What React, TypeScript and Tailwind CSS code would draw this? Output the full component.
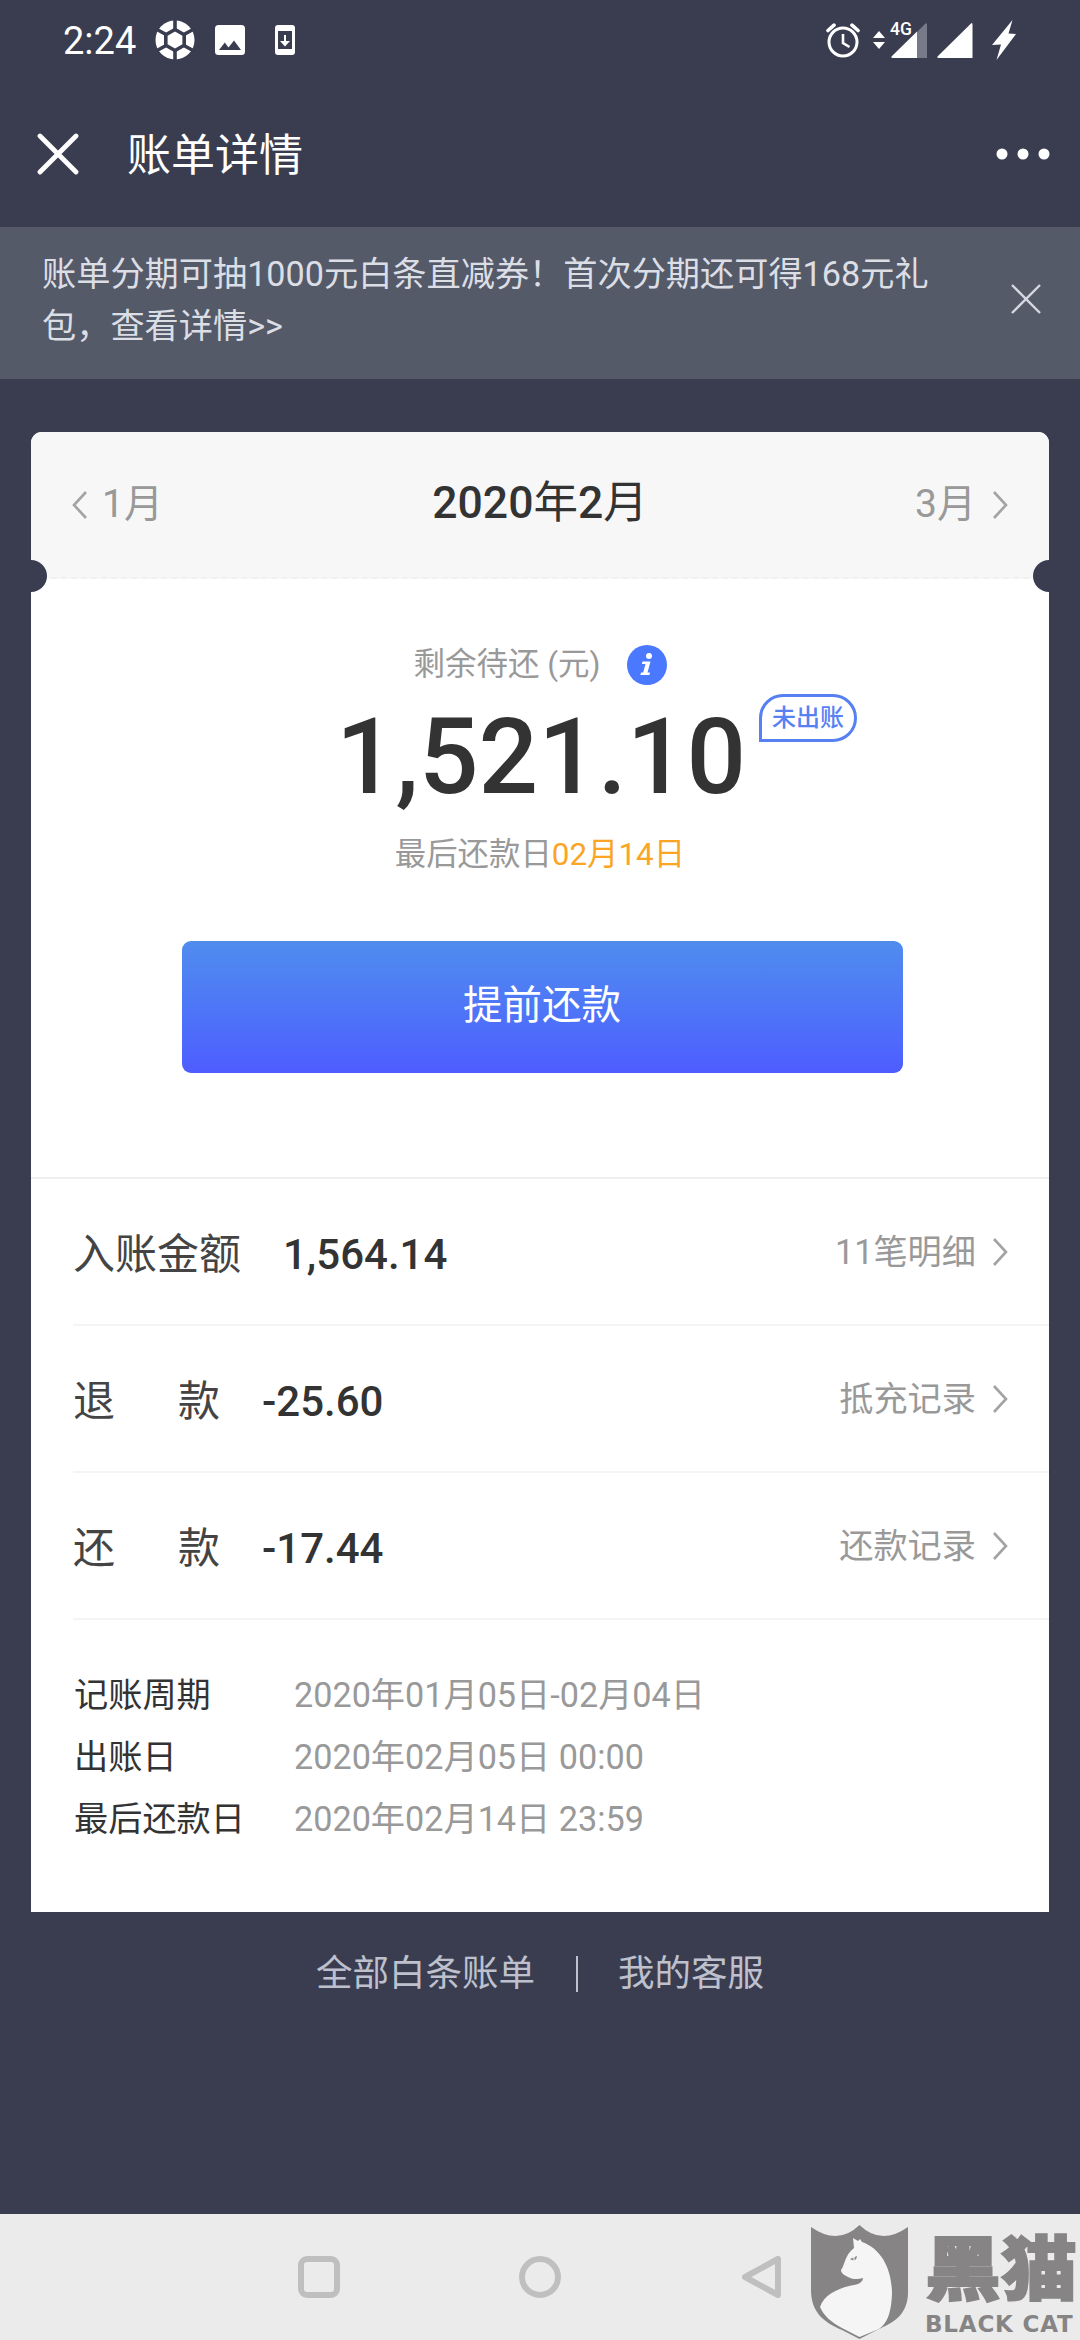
import clsx from 'clsx'
import type { ReactNode } from 'react'

type BillRow = {
    label: string
    amount: string
    link: string
}

const rows: BillRow[] = [
    { label: '入账金额', amount: '1,564.14', link: '11笔明细' },
    { label: '退款', amount: '-25.60', link: '抵充记录' },
    { label: '还款', amount: '-17.44', link: '还款记录' },
]

const details = [
    { label: '记账周期', value: '2020年01月05日-02月04日' },
    { label: '出账日', value: '2020年02月05日 00:00' },
    { label: '最后还款日', value: '2020年02月14日 23:59' },
]

const Chevron = ({ left, className }: { left?: boolean; className?: string }) => (
    <svg
        viewBox="0 0 16 28"
        className={clsx('h-7 w-4 shrink-0', left && 'rotate-180', className)}
        fill="none"
        stroke="#a3a3a3"
        strokeWidth="2.6"
    >
        <path d="M2 1 14 14 2 27" />
    </svg>
)

const BallIcon = () => (
    <svg viewBox="0 0 40 40" className="size-10">
        <circle cx="20" cy="20" r="19.5" fill="#fff" />
        <g stroke="#3a3d50" strokeWidth="3.6" fill="none">
            <path d="M20 0V10M20 30V40M2 9.5 12 15M28 15 38 9.5M2 30.5 12 25M28 25 38 30.5" />
            <path d="M20 9.5 29.2 14.8V25.2L20 30.5 10.8 25.2V14.8Z" />
        </g>
    </svg>
)

const StatusBar = () => (
    <div className="flex h-20 items-center pr-16 pl-[63px] text-white">
        <span className="w-[92px] pt-[2px] text-[38px] leading-[40px]">2:24</span>
        <BallIcon />
        <svg viewBox="0 0 30 30" className="ml-5 size-[30px]">
            <path
                fillRule="evenodd"
                fill="#fff"
                d="M3.5 0h23A3.5 3.5 0 0 1 30 3.5v23a3.5 3.5 0 0 1-3.5 3.5h-23A3.5 3.5 0 0 1 0 26.5v-23A3.5 3.5 0 0 1 3.5 0ZM4 25h22l-7-9.5-5.5 7-3.7-5Z"
            />
        </svg>
        <svg viewBox="0 0 20 30" className="ml-[30px] h-[30px] w-5">
            <path
                fillRule="evenodd"
                fill="#fff"
                d="M3 0h14a3 3 0 0 1 3 3v24a3 3 0 0 1-3 3H3a3 3 0 0 1-3-3V3a3 3 0 0 1 3-3ZM3 6v18h14V6ZM9 10h2v6h4l-5 5.5L5 16h4Z"
            />
        </svg>
        <div className="ml-auto flex items-center">
            <svg viewBox="0 0 34 36" className="h-9 w-[34px]" fill="none" stroke="#fff">
                <circle cx="17" cy="20" r="14" strokeWidth="3" />
                <path d="M17 12v9l6.5 4" strokeWidth="2.6" />
                <path d="M2 8.5 8 3.2M32 8.5 26 3.2" strokeWidth="3.6" strokeLinecap="round" />
            </svg>
            <svg viewBox="0 0 12 18" className="ml-[13px] h-[18px] w-3" fill="#fff">
                <path d="M0 7 6 0l6 7ZM0 11h12l-6 7Z" />
            </svg>
            <div className="relative ml-[6px]">
                <svg viewBox="0 0 36 36" className="size-9">
                    <path d="M26 10 34 2Q36 0 36 3V36H26Z" fill="#777b89" />
                    <path d="M26 9.5V36H2Q-1 36 1 34Z" fill="#fff" />
                </svg>
                <span className="absolute -top-px -left-px text-[17.5px] leading-[17px] font-medium">
                    4G
                </span>
            </div>
            <svg viewBox="0 0 36 36" className="ml-[10px] size-9">
                <path d="M1 34 34 1.5Q35.5 0 35.5 2.5V36H2Q-1 36 1 34Z" fill="#fff" />
            </svg>
            <svg viewBox="0 0 24 40" className="ml-[19px] h-10 w-6" fill="#fff">
                <path d="M20.500 0 16.500 13.500 24 14 4.500 40 9 24.500 0 25Z" />
            </svg>
        </div>
    </div>
)

const TitleBar = () => (
    <header className="flex h-[147px] items-center pr-[30px] pl-[37px] text-white">
        <svg viewBox="0 0 42 42" className="size-[42px]" stroke="#fff" strokeWidth="4.8" strokeLinecap="round">
            <path d="M3 3 39 39M39 3 3 39" />
        </svg>
        <h1 className="ml-12 pt-1 text-[44px] leading-[50px]">账单详情</h1>
        <svg viewBox="0 0 54 12" className="ml-auto h-3 w-[54px]" fill="#fff">
            <circle cx="6" cy="6" r="5.5" />
            <circle cx="27" cy="6" r="5.5" />
            <circle cx="48" cy="6" r="5.5" />
        </svg>
    </header>
)

const PromoBanner = () => (
    <div className="flex h-[152px] items-center bg-[#555a69] pr-[39px] pl-[42px]">
        <p className="w-[900px] pb-[7px] text-[34.2px] leading-[52px] text-[#dcdee6]">
            账单分期可抽1000元白条直减券！首次分期还可得168元礼
            <br />
            包，查看详情&gt;&gt;
        </p>
        <svg viewBox="0 0 30 30" className="mt-[-8px] ml-auto size-[30px]" stroke="#d5d8e0" strokeWidth="2.4">
            <path d="M1 1 29 29M29 1 1 29" />
        </svg>
    </div>
)

const MonthSwitch = () => (
    <div className="relative flex h-[147px] items-center justify-between rounded-t-[11px] border-b-2 border-dashed border-[#f1f1f1] bg-[#f7f7f7] px-[41px] text-[39px] text-[#999]">
        <span className="flex w-[120px] items-center gap-[14px]">
            <Chevron left />
            1月
        </span>
        <span className="pb-[2px] text-[44.5px] font-medium text-[#333]">
            2020<span className="font-normal">年</span>2<span className="font-normal">月</span>
        </span>
        <span className="flex w-[120px] items-center justify-end gap-4">
            3月
            <Chevron />
        </span>
        <i className="absolute -bottom-[15px] -left-4 size-8 rounded-full bg-[#3a3d50]" />
        <i className="absolute -right-4 -bottom-[15px] size-8 rounded-full bg-[#3a3d50]" />
    </div>
)

const Summary = () => (
    <section className="flex h-[600px] flex-col items-center border-b-2 border-[#efefef] pt-[60px]">
        <div className="flex h-[52px] items-center text-[31.5px] text-[#999]">
            剩余待还 (元)
            <svg viewBox="0 0 40 40" className="ml-[26px] size-10">
                <circle cx="20" cy="20" r="20" fill="#4a78ff" />
                <g fill="#fff">
                    <circle cx="22" cy="11" r="3" />
                    <path d="M15.5 16.5h8l-3 11h2.5l-.6 2.5h-9l.6-2.5h2.2l2.3-8.500h-3.6Z" />
                </g>
            </svg>
        </div>
        <div className="relative mt-1 ml-[2px] text-[104.8px] leading-[126px] font-medium text-[#333]">
            1,521.10
            <span className="absolute top-[-1px] left-[423px] flex h-[48px] w-[98px] items-center justify-center rounded-full rounded-bl-none border-[3.5px] border-[#5781f2] text-[24px] leading-none whitespace-nowrap text-[#5781f2]">
                未出账
            </span>
        </div>
        <p className="mt-[9px] text-[31.4px] leading-[50px] text-[#999]">
            最后还款日<span className="text-[#faa524]">02月14日</span>
        </p>
        <button className="mt-[61px] ml-1 h-[132px] w-[721px] rounded-[9px] bg-linear-to-b from-[#508cee] to-[#4e5cff] pb-[2px] text-[39.5px] text-white">
            提前还款
        </button>
    </section>
)

const Row = ({ label, amount, link }: BillRow) => (
    <div className="ml-[42px] flex h-[147px] items-center border-b-2 border-[#f4f4f4] pt-[2px] pr-[41px]">
        <span
            className={clsx(
                'flex justify-between pt-[4px] text-[42px] text-[#444]',
                label.length === 2 ? 'w-[147px]' : 'w-[168px]',
            )}
        >
            {label.length === 2 ? [...label].map(char => <span key={char}>{char}</span>) : label}
        </span>
        <span className="ml-[42px] pt-[4px] text-[42px] font-medium text-[#333]">{amount}</span>
        <span className="ml-auto flex items-center gap-4 text-[34.2px] text-[#999]">
            {link}
            <Chevron />
        </span>
    </div>
)

const Card = ({ children }: { children: ReactNode }) => (
    <main className="mx-[31px] mt-[53px] h-[1480px] rounded-t-[11px] bg-white">{children}</main>
)

const Watermark = () => (
    <div className="absolute top-[2224px] left-[811px] flex text-[#868484]">
        <svg viewBox="0 0 97 116" className="h-[116px] w-[97px]">
            <path
                d="M0 3Q27 22 48.500 1 70 22 97 3V68C97 92 81 99 66 106L48.500 115 31 106C15 99 0 90 0 66Z"
                fill="#868484"
            />
            <path
                d="M42 14 47 17 49 15 51 18C71 25 81 46 81 70 80 92 75 100 68 105L48.500 113 31 104C20 98 13 92 9 83 13 70 30 63 43 61 49 60 52 57 52 54 46 56 40 55 37 53 33 51 30 49 30 46 34 41 33 32 43 24Z"
                fill="#f5f5f5"
            />
            <path d="M39 35 46 32Q45 39 39 35Z" fill="#868484" />
            <path d="M43 33v4" stroke="#f5f5f5" strokeWidth="1.2" />
        </svg>
        <div className="ml-[17px] flex w-[154px] flex-col">
            <span className="mt-[6px] scale-y-[0.92] text-[76px] leading-[82px] font-black whitespace-nowrap [-webkit-text-stroke:2px_#868484]">
                黑猫
            </span>
            <span className="font-['DejaVu_Sans',sans-serif] text-[23px] leading-[24px] font-bold tracking-[0.8px] whitespace-nowrap">
                BLACK CAT
            </span>
        </div>
    </div>
)

const NavBar = () => (
    <nav className="flex h-[126px] items-center bg-[#ebebeb] pl-[298px]">
        <svg viewBox="0 0 42 42" className="size-[42px]" fill="none" stroke="#bfbfbf" strokeWidth="6">
            <rect x="3" y="3" width="36" height="36" rx="6" />
        </svg>
        <svg viewBox="0 0 42 42" className="ml-[179px] size-[42px]" fill="none" stroke="#bfbfbf" strokeWidth="6">
            <circle cx="21" cy="21" r="18" />
        </svg>
        <svg
            viewBox="0 0 40 42"
            className="ml-[181px] h-[42px] w-10"
            fill="none"
            stroke="#bfbfbf"
            strokeWidth="6"
            strokeLinejoin="round"
        >
            <path d="M36 3V39L3 21Z" />
        </svg>
    </nav>
)

export default function App() {
    return (
        <div className="relative flex h-[2340px] w-[1080px] flex-col overflow-hidden bg-[#3a3d50] font-['Roboto','Noto_Sans_CJK_SC',sans-serif]">
            <StatusBar />
            <TitleBar />
            <PromoBanner />
            <Card>
                <MonthSwitch />
                <Summary />
                {rows.map(row => (
                    <Row key={row.link} {...row} />
                ))}
                <dl className="grid grid-cols-[220px_1fr] pt-[44px] pl-[43px] text-[34.2px] leading-[62px]">
                    {details.map(({ label, value }) => (
                        <div key={label} className="contents">
                            <dt className="text-[#333]">{label}</dt>
                            <dd className="text-[#999]">{value}</dd>
                        </div>
                    ))}
                </dl>
            </Card>
            <footer className="mt-[37px] flex h-[50px] items-center justify-center text-[36.5px] text-[#bec1cd]">
                <span>全部白条账单</span>
                <i className="mr-[40px] ml-[41px] h-9 w-[2px] bg-[#bec1cd]" />
                <span>我的客服</span>
            </footer>
            <div className="grow" />
            <NavBar />
            <Watermark />
        </div>
    )
}
